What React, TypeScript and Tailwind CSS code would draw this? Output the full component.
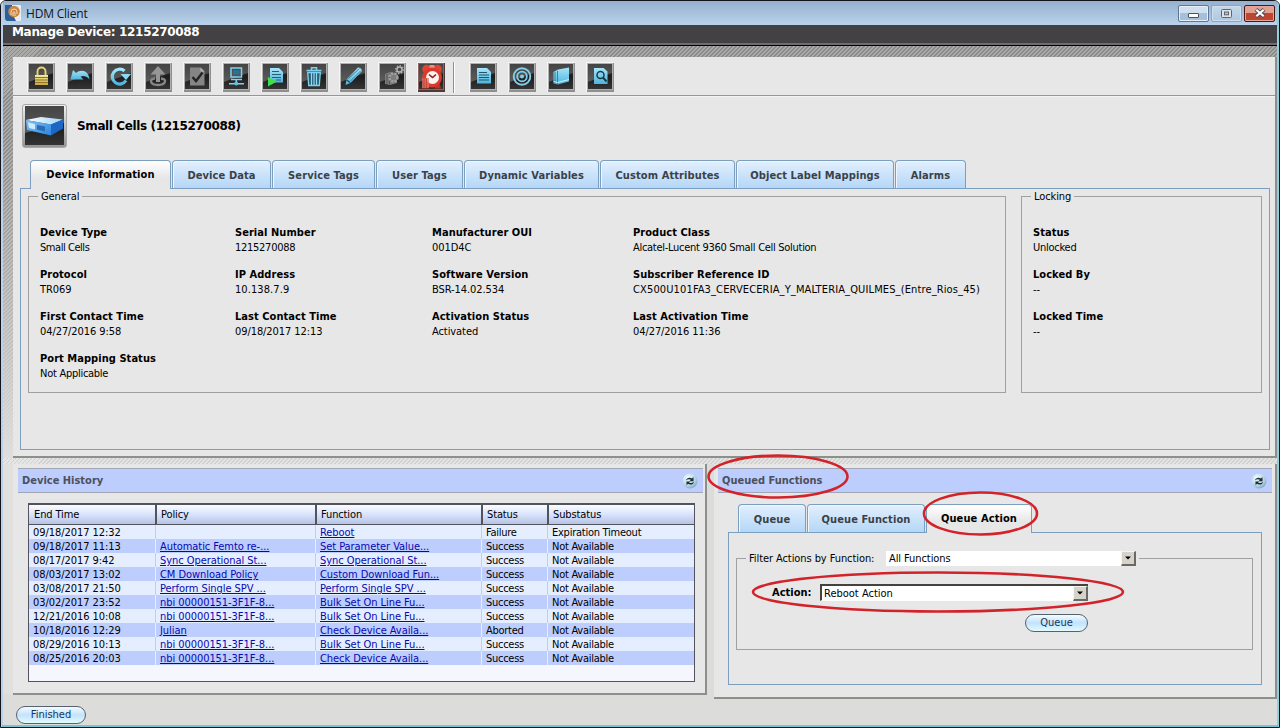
import type { ReactNode } from "react";

const REG = "font-['DejaVu_Sans_Condensed','DejaVu_Sans',sans-serif] [font-stretch:condensed] text-[11px] leading-[14px] whitespace-nowrap";
const BOLD = "font-['DejaVu_Sans_Condensed','DejaVu_Sans',sans-serif] [font-stretch:condensed] font-bold text-[11px] leading-[14px] whitespace-nowrap";
const STRIPES = "bg-[repeating-linear-gradient(135deg,#8a8a8a_0px,#8a8a8a_1.4px,#aaaaa8_1.4px,#aaaaa8_2.83px)]";
const PALE_STRIPES = "bg-[repeating-linear-gradient(135deg,#d2d0ce_0px,#d2d0ce_1.4px,#e6e6e6_1.4px,#e6e6e6_2.83px)]";

function IconButton({ children, alarm }: { children: ReactNode; alarm?: boolean }) {
  return (
    <svg width="28" height="30" viewBox="0 0 28 30" className="shrink-0">
      <rect x="0" y="0" width="28" height="30" fill="#f6f6f6" />
      <rect x="1" y="1" width="27" height="29" fill={alarm ? "#4f3a38" : "#8f8f8f"} />
      <rect x="1" y="1" width="26" height="27" fill={alarm ? "#8a6460" : "#b0b0b0"} />
      <rect x="2" y="2" width="24" height="25" fill="url(#btnDark)" />
      <path d="M2 2H26V11C20 13 10 17 2 20Z" fill="url(#btnGloss)" />
      {children}
    </svg>
  );
}

function Defs() {
  return (
    <svg width="0" height="0" className="absolute">
      <defs>
        <linearGradient id="btnDark" x1="0" y1="0" x2="0" y2="1">
          <stop offset="0" stopColor="#3a3a3a" />
          <stop offset="0.5" stopColor="#1d1d1d" />
          <stop offset="1" stopColor="#343434" />
        </linearGradient>
        <linearGradient id="btnGloss" x1="0" y1="0" x2="0" y2="1">
          <stop offset="0" stopColor="#444" />
          <stop offset="1" stopColor="#5c5c5c" />
        </linearGradient>
        <linearGradient id="cy" x1="0" y1="0" x2="0" y2="1">
          <stop offset="0" stopColor="#a5e6fb" />
          <stop offset="1" stopColor="#4fb3dc" />
        </linearGradient>
        <linearGradient id="gold" x1="0" y1="0" x2="0" y2="1">
          <stop offset="0" stopColor="#f7ec9c" />
          <stop offset="1" stopColor="#c9a83a" />
        </linearGradient>
        <linearGradient id="boxTop" x1="0" y1="0" x2="1" y2="0">
          <stop offset="0" stopColor="#ffffff" />
          <stop offset="1" stopColor="#9fd3fa" />
        </linearGradient>
        <linearGradient id="boxFront" x1="0" y1="0" x2="1" y2="1">
          <stop offset="0" stopColor="#7fc3fb" />
          <stop offset="1" stopColor="#2b84dd" />
        </linearGradient>
        <radialGradient id="refBg" cx="0.35" cy="0.3" r="0.8">
          <stop offset="0" stopColor="#f2fbff" />
          <stop offset="0.6" stopColor="#b5d9e8" />
          <stop offset="1" stopColor="#7f9db5" />
        </radialGradient>
      </defs>
    </svg>
  );
}

function Toolbar() {
  return (
    <div className="flex h-[39px] shrink-0 items-start border-b border-[#969696] pt-[5px] pl-[14px] shadow-[0_1px_0_#f4f4f4]">
      <div className="flex gap-[11px]">
        <IconButton>
          <path d="M10.500 13.500V9.500a4 4 0 0 1 8 0V13.500" fill="none" stroke="#e6d477" strokeWidth="1.900" />
          <rect x="8" y="13" width="13" height="10" fill="url(#gold)" />
          <path d="M8 15.500h13M8 18h13M8 20.500h13" stroke="#8d7328" strokeWidth="1" />
        </IconButton>
        <IconButton>
          <path d="M4.500 17.500L7 8L10 11C15.500 6.500 23 9 23.500 17.500C20.500 14 17 13.500 14.500 14.500L17.500 17.500Z" fill="url(#cy)" />
        </IconButton>
        <IconButton>
          <path d="M21 18.500A7.400 7.400 0 1 1 19.500 9" fill="none" stroke="url(#cy)" strokeWidth="3.200" />
          <path d="M15.500 12H26L21 18Z" fill="#8bd9f4" />
        </IconButton>
        <IconButton>
          <path d="M11 16.500C4.500 17 6 23 14 23S23.500 17 17 16.500" fill="none" stroke="#868686" strokeWidth="2.400" />
          <path d="M14 4L21.500 12.500H16V20H12V12.500H6.500Z" fill="#969696" />
        </IconButton>
        <IconButton>
          <path d="M7 5.500H17.500L21.500 9.500V23.500H7Z" fill="#858585" />
          <path d="M17.500 5.500V9.500H21.500" fill="#b5b5b5" />
          <path d="M9.500 15L13 19L19.500 10.500" fill="none" stroke="#242424" strokeWidth="2.400" />
        </IconButton>
        <IconButton>
          <rect x="9" y="6" width="10.500" height="9" fill="none" stroke="#7fd2ef" strokeWidth="1.500" />
          <rect x="11" y="8" width="6.500" height="4.500" fill="#2c7190" />
          <path d="M9 17.500H20M14.300 17V21M7 21.700H22" stroke="#7fd2ef" strokeWidth="1.500" />
          <circle cx="14.300" cy="21.500" r="2" fill="#5fbfe4" />
        </IconButton>
        <IconButton>
          <path d="M9 6H18L22 10V20.500H9Z" fill="url(#cy)" />
          <path d="M11 9.500H18M11 12.500H20M11 15.500H20M15 18H20" stroke="#2a5e74" strokeWidth="1" />
          <path d="M7 15L16 19.500L7 24.500Z" fill="#3fe04a" />
        </IconButton>
        <IconButton>
          <path d="M6.500 8.500H21.500M11.500 8V5.700H16.500V8" fill="none" stroke="#7fd2ef" strokeWidth="1.500" />
          <path d="M7.700 10.500H20.300L19.300 23.500H8.700Z" fill="#2b5e74" stroke="#7fd2ef" strokeWidth="1.300" />
          <path d="M11.500 11V23M14 11V23M16.500 11V23" stroke="#8bdcf6" strokeWidth="1.200" />
        </IconButton>
        <IconButton>
          <path d="M6.500 23L7.500 17.500L19 5.500Q22.500 5.500 23 9L11.500 21Z" fill="url(#cy)" />
          <path d="M9.500 16.500L20.500 6.500M11.500 19L22 8.500" stroke="#2b708c" strokeWidth="0.800" />
          <path d="M7.500 17.800L11.300 20.800" stroke="#1d4b5f" strokeWidth="1.200" />
        </IconButton>
        <IconButton>
          <path d="M7 12L12 10L19 12V21L12 23L7 22Z" fill="#7d7d7d" />
          <path d="M9 12V22M11.500 11.500V22.500" stroke="#555" />
          <circle cx="15.500" cy="15.500" r="4" fill="none" stroke="#a2a2a2" strokeWidth="2.400" strokeDasharray="2 1.200" />
          <circle cx="21.500" cy="7.500" r="2.600" fill="none" stroke="#b4b4b4" strokeWidth="1.500" />
          <circle cx="21.500" cy="7.500" r="3.900" fill="none" stroke="#b4b4b4" strokeWidth="1.200" strokeDasharray="1.400 1.600" />
        </IconButton>
        <IconButton alarm>
          <circle cx="9.500" cy="7" r="4.300" fill="#e04434" />
          <circle cx="20.500" cy="7" r="4.300" fill="#e04434" />
          <rect x="12.500" y="3" width="5" height="3" fill="#f09080" />
          <path d="M7 20L5 26.500H12ZM22 20L24 26.500H17Z" fill="#c42f22" />
          <circle cx="15" cy="15.500" r="10" fill="#d93a2b" />
          <circle cx="15.500" cy="15.500" r="6.500" fill="#fdf3f0" />
          <path d="M12 12.500L15.500 15.500L19 12.500" fill="none" stroke="#8a2018" strokeWidth="1.600" />
          <path d="M5 16H12V26H5Z" fill="#e0786f" opacity="0.75" />
          <path d="M7 16V26M9.500 16V26" stroke="#c23a30" strokeWidth="0.800" />
        </IconButton>
      </div>
      <div className="mr-[14px] ml-[8px] h-[31px] w-[2px] border-l border-[#909090] bg-white" />
      <div className="flex gap-[11px]">
        <IconButton>
          <path d="M8 6H18L22 10V21.500H8Z" fill="url(#cy)" />
          <path d="M10 10.500H18M10 13H20M10 15.500H20M10 18H20" stroke="#24556b" strokeWidth="1.100" />
        </IconButton>
        <IconButton>
          <circle cx="14" cy="14.500" r="8.300" fill="none" stroke="#82cfeb" strokeWidth="1.900" />
          <circle cx="14" cy="14.500" r="4.800" fill="none" stroke="#82cfeb" strokeWidth="1.800" />
          <circle cx="14" cy="14.500" r="2" fill="#82cfeb" />
        </IconButton>
        <IconButton>
          <path d="M6.500 10L11 7.500L22 5.500V19.500L11 22.500L6.500 21.500Z" fill="url(#cy)" />
          <path d="M8 10V21.500M10.500 9V22.500" fill="none" stroke="#2e7a99" strokeWidth="0.900" />
          <path d="M6.500 19.500L10.500 20.500L22 17.500" fill="none" stroke="#d5f6ff" strokeWidth="0.900" />
        </IconButton>
        <IconButton>
          <path d="M8 6H17.500L21.500 9.500V22H8Z" fill="url(#cy)" />
          <circle cx="14.500" cy="13" r="3.500" fill="none" stroke="#183c4b" strokeWidth="1.500" />
          <path d="M17 15.500L20.500 19.500" stroke="#183c4b" strokeWidth="1.900" />
        </IconButton>
      </div>
    </div>
  );
}

function Tab({ label, w, active }: { label: string; w: string; active?: boolean }) {
  return (
    <div
      className={
        w +
        " flex shrink-0 items-center justify-center rounded-t-[4px] border border-[#7d9fbf] tracking-[0.1px] " +
        BOLD +
        (active
          ? " h-[29px] border-b-0 bg-linear-to-b from-white to-[#e7e7e7] to-60% text-black"
          : " h-[28px] border-b-0 bg-linear-to-b from-[#e3f0fe] via-[#cbe3fa] to-[#b5d6f8] pt-[2px] text-[#3a4148] shadow-[inset_1px_1px_0_#eef7ff]")
      }
    >
      {label}
    </div>
  );
}

function Field({ label, value, track = "tracking-[-0.08px]" }: { label: string; value: string; track?: string }) {
  return (
    <div className="h-[42px]">
      <div className={BOLD + " h-[15px] tracking-[0.05px]"}>{label}</div>
      <div className={REG + " " + track}>{value}</div>
    </div>
  );
}

function Legend({ children }: { children: ReactNode }) {
  return <legend className={REG + " ml-[9px] h-[15px] px-[3px] pt-px tracking-[-0.1px]"}>{children}</legend>;
}

function PanelBar({ title }: { title: string }) {
  return (
    <div className="flex h-[25px] shrink-0 items-center justify-between border-y border-[#a3a7b5] bg-[#bccdfe] pr-[5px] pl-[4px]">
      <span className={BOLD + " pt-px text-[#4c505c]"}>{title}</span>
      <svg width="16" height="16" viewBox="0 0 16 16">
        <circle cx="8" cy="8" r="7.500" fill="url(#refBg)" />
        <path d="M4 7.500C4.500 4.500 8 4 10 5.500L11.500 4V8.200H7.500L9 6.800C7.500 6 5.500 6 4 7.500Z" fill="#1f2b33" />
        <path d="M12 8.700C11.500 11.700 8 12.200 6 10.700L4.500 12.200V8.500H8.500L7 9.700C8.500 10.300 10.500 10.200 12 8.700Z" fill="#1f2b33" />
      </svg>
    </div>
  );
}

function PillButton({ label, w }: { label: string; w: string }) {
  return (
    <button
      className={
        w +
        " flex h-[18px] shrink-0 items-center justify-center rounded-full border border-[#56626e] bg-linear-to-b from-[#f5fbff] via-[#c3e2fc] to-[#e2fbff] text-[#12395f] " +
        REG
      }
    >
      {label}
    </button>
  );
}

function Arrow() {
  return (
    <span className="flex h-[15px] w-[15px] shrink-0 items-center justify-center border-t border-r-2 border-b-2 border-l border-t-[#f4f4f0] border-r-[#6b6964] border-b-[#6b6964] border-l-[#f4f4f0] bg-[#d6d3cb]">
      <svg width="6" height="4" viewBox="0 0 6 4"><path d="M0 0.500H6L3 3.500Z" fill="#000" /></svg>
    </span>
  );
}

const NBI = "nbi 00000151-3F1F-8...";
const ROWS = [
  ["09/18/2017 12:32", "", "Reboot", "Failure", "Expiration Timeout"],
  ["09/18/2017 11:13", "Automatic Femto re-...", "Set Parameter Value...", "Success", "Not Available"],
  ["08/17/2017 9:42", "Sync Operational St...", "Sync Operational St...", "Success", "Not Available"],
  ["08/03/2017 13:02", "CM Download Policy", "Custom Download Fun...", "Success", "Not Available"],
  ["03/08/2017 21:50", "Perform Single SPV ...", "Perform Single SPV ...", "Success", "Not Available"],
  ["03/02/2017 23:52", NBI, "Bulk Set On Line Fu...", "Success", "Not Available"],
  ["12/21/2016 10:08", NBI, "Bulk Set On Line Fu...", "Success", "Not Available"],
  ["10/18/2016 12:29", "Julian", "Check Device Availa...", "Aborted", "Not Available"],
  ["08/29/2016 10:13", NBI, "Bulk Set On Line Fu...", "Success", "Not Available"],
  ["08/25/2016 20:03", NBI, "Check Device Availa...", "Success", "Not Available"],
];
const GRID = "grid grid-cols-[126px_160px_166px_66px_147px]";
const TRACKS = ["tracking-[-0.06px]", "tracking-[-0.06px]", "tracking-[-0.06px]", "tracking-[-0.27px]", "tracking-[-0.25px]"];

function HistoryTable() {
  return (
    <div className="mt-[10px] ml-[10px] flex h-[179px] w-[667px] flex-col border border-[#53535b] border-t-2 bg-[#f6f7fe]">
      <div className={GRID + " h-[20px] shrink-0 border-b border-[#53535b] bg-linear-to-b from-[#fbfcff] via-[#d9e3fb] to-[#b6c3e4]"}>
        {["End Time", "Policy", "Function", "Status", "Substatus"].map((h, i) => (
          <div key={h} className={REG + " pt-[3px] tracking-[-0.12px] " + (i ? "border-l-2 border-[#53535b] pl-[4px]" : "pl-[5px]")}>{h}</div>
        ))}
      </div>
      {ROWS.map((r, n) => (
        <div key={n} className={GRID + " h-[14px] shrink-0 " + (n % 2 ? "bg-[#bccdfe]" : "bg-[#e5eefe]")}>
          {r.map((c, i) => (
            <div key={i} className={REG + " pl-[4px] " + TRACKS[i] + (i ? " border-l " : " ") + (n % 2 ? "border-[#e5eefe]" : "border-[#bccdfe]")}>
              <span className="relative top-px">
                {i === 1 || i === 2 ? <a className="text-[#0808b0] underline underline-offset-1">{c}</a> : c}
              </span>
            </div>
          ))}
        </div>
      ))}
    </div>
  );
}

function TitleBar() {
  return (
    <div className="flex h-[24px] shrink-0 items-center bg-linear-to-b from-[#95b1cf] to-[#bad2eb] pr-[2px] pl-[2px]">
      <svg width="16" height="16" viewBox="0 0 16 16">
        <rect width="16" height="16" rx="1" fill="#e8edf2" />
        <path d="M0 0H7V8L11 16H2Q0 16 0 13Z" fill="#2f5f95" />
        <circle cx="9" cy="6.500" r="5.800" fill="#c98544" />
        <path d="M6 10V7a3 3 0 0 1 6 0v2M8 11V7.500a1.200 1.200 0 0 1 2 0V11" fill="none" stroke="#f7dcb5" strokeWidth="1" />
      </svg>
      <span className="ml-[5px] flex-1 pt-px font-['Open_Sans','Noto_Sans',sans-serif] text-[12px] leading-[16px] tracking-[-0.2px] text-[#10161e]">HDM Client</span>
      <div className="flex gap-[2px]">
        <div className="flex h-[17px] w-[31px] items-end justify-center rounded-[2px] border border-[#5b7696] bg-linear-to-b from-[#d0dfef] from-50% to-[#a7c0da] to-50% pb-[3px] shadow-[inset_0_0_0_1px_#e6eff8]">
          <div className="h-[5px] w-[11px] rounded-[1px] border border-[#4b5360] bg-white" />
        </div>
        <div className="flex h-[17px] w-[31px] items-center justify-center rounded-[2px] border border-[#8aa4c1] bg-linear-to-b from-[#c5d8eb] to-[#adc7e0] shadow-[inset_0_0_0_1px_#cfdff0]">
          <svg width="11" height="9" viewBox="0 0 11 9"><rect x="0.500" y="0.500" width="10" height="8" rx="1" fill="#dfe3e8" stroke="#5c6470" /><rect x="3.500" y="3" width="4" height="2.800" fill="#b0c5da" stroke="#5c6470" /></svg>
        </div>
        <div className="flex h-[17px] w-[31px] items-center justify-center rounded-[2px] border border-[#4a1713] bg-linear-to-b from-[#e0a192] from-50% to-[#c0452f] to-50% shadow-[inset_0_0_0_1px_#e4a698]">
          <svg width="12" height="10" viewBox="0 0 12 10"><path d="M2 1.500L10 8.500M10 1.500L2 8.500" stroke="#4f4a55" strokeWidth="4" /><path d="M2.300 1.700L9.700 8.300M9.700 1.700L2.300 8.300" stroke="#fff" strokeWidth="2.200" /></svg>
        </div>
      </div>
    </div>
  );
}

export default function App() {
  return (
    <div className="relative flex h-[728px] w-[1280px] overflow-hidden rounded-t-[6px] border border-[#141418] bg-[#dcdddb] text-black">
      <Defs />
      <div className="w-[2px] shrink-0 bg-[#b9d1ea]" />
      <div className="flex w-[1274px] shrink-0 flex-col">
        <TitleBar />
        <div className="h-[18px] shrink-0 bg-[#434143] pl-[9px]">
          <div className="font-['DejaVu_Sans',sans-serif] text-[12px] leading-[14px] font-bold tracking-[-0.32px] text-white">Manage Device: 1215270088</div>
        </div>
        <div className="h-[3px] shrink-0 border-b border-black bg-[#6f6d6f]" />
        <div className={STRIPES + " h-[11px] shrink-0"} />

        <div className="flex h-[401px] shrink-0">
          <div className={STRIPES + " relative w-[10px] shrink-0"}>
            <div className="h-full bg-linear-to-b from-transparent from-20% to-[#e6e6e6]/90" />
          </div>
          <div className="flex w-[1264px] flex-col border-r-2 border-b-2 border-[#8b908d] bg-[#e7e7e7]">
            <Toolbar />
            <div className="flex h-[59px] shrink-0 items-center pl-[9px]">
              <div className="flex h-[44px] w-[45px] items-center justify-center rounded-[3px] border border-[#a8a8a8] bg-linear-to-b from-[#f2f2f2] to-[#949494]">
                <svg width="39" height="39" viewBox="0 0 39 39">
                  <rect width="39" height="39" fill="url(#btnDark)" />
                  <path d="M0 0H39V17L0 27Z" fill="url(#btnGloss)" />
                  <path d="M1 14L16 11L38 13.500L26 18.500Z" fill="url(#boxTop)" />
                  <path d="M1 14L26 18.500V29.500L2 24Z" fill="url(#boxFront)" />
                  <path d="M26 18.500L38 13.500V22.500L26 29.500Z" fill="#1c66c4" />
                  <path d="M3 16.500L10 18V23.500L4 22Z" fill="#cfe9ff" />
                  <path d="M12 19L20 20.500V25.500L12 23.500Z" fill="#2b6cb0" />
                </svg>
              </div>
              <span className="ml-[10px] font-['DejaVu_Sans',sans-serif] text-[12px] leading-[16px] font-bold tracking-[-0.38px]">Small Cells (1215270088)</span>
            </div>
            <div className="relative z-10 mt-[5px] -mb-px flex h-[29px] shrink-0 items-start gap-px pl-[17px]">
              <Tab label="Device Information" w="w-[141px]" active />
              <Tab label="Device Data" w="w-[99px]" />
              <Tab label="Service Tags" w="w-[103px]" />
              <Tab label="User Tags" w="w-[87px]" />
              <Tab label="Dynamic Variables" w="w-[135px]" />
              <Tab label="Custom Attributes" w="w-[135px]" />
              <Tab label="Object Label Mappings" w="w-[158px]" />
              <Tab label="Alarms" w="w-[71px]" />
            </div>
            <div className="ml-[7px] flex h-[262px] w-[1250px] shrink-0 items-start gap-[15px] border border-[#7d9fbf] pl-[7px]">
              <fieldset className="h-[204px] w-[978px] border border-[#a0a0a0]">
                <Legend>General</Legend>
                <div className="grid grid-cols-[195px_197px_201px_360px] pt-[22px] pl-[11px]">
                  <Field label="Device Type" value="Small Cells" track="tracking-[-0.45px]" />
                  <Field label="Serial Number" value="1215270088" track="tracking-[-0.27px]" />
                  <Field label="Manufacturer OUI" value="001D4C" />
                  <Field label="Product Class" value="Alcatel-Lucent 9360 Small Cell Solution" track="tracking-[-0.29px]" />
                  <Field label="Protocol" value="TR069" />
                  <Field label="IP Address" value="10.138.7.9" track="tracking-[0.08px]" />
                  <Field label="Software Version" value="BSR-14.02.534" />
                  <Field label="Subscriber Reference ID" value="CX500U101FA3_CERVECERIA_Y_MALTERIA_QUILMES_(Entre_Rios_45)" track="tracking-[0.13px]" />
                  <Field label="First Contact Time" value="04/27/2016 9:58" />
                  <Field label="Last Contact Time" value="09/18/2017 12:13" />
                  <Field label="Activation Status" value="Activated" />
                  <Field label="Last Activation Time" value="04/27/2016 11:36" />
                  <Field label="Port Mapping Status" value="Not Applicable" track="tracking-[-0.27px]" />
                </div>
              </fieldset>
              <fieldset className="h-[204px] w-[241px] border border-[#a0a0a0]">
                <Legend>Locking</Legend>
                <div className="pt-[22px] pl-[11px]">
                  <Field label="Status" value="Unlocked" track="tracking-[-0.25px]" />
                  <Field label="Locked By" value="--" />
                  <Field label="Locked Time" value="--" />
                </div>
              </fieldset>
            </div>
          </div>
        </div>

        <div className={PALE_STRIPES + " h-[6px] shrink-0"} />

        <div className="flex h-[235px] shrink-0 items-start">
          <div className="h-[230px] w-[10px] shrink-0 bg-[#e0e0df]" />
          <div className="h-[231px] w-[694px] shrink-0 border-r-2 border-b-2 border-[#8b908d] bg-[#e7e7e7] pt-[4px] pl-[5px]">
            <div className="w-[685px]"><PanelBar title="Device History" /></div>
            <HistoryTable />
          </div>
          <div className="w-[7px] shrink-0" />
          <div className="flex h-[235px] w-[563px] shrink-0 flex-col border-r-2 border-b-2 border-[#8b908d] bg-[#e7e7e7] pt-[4px] pr-[3px] pl-[4px]">
            <PanelBar title="Queued Functions" />
            <div className="relative z-10 mt-[11px] -mb-px flex h-[29px] shrink-0 items-start gap-px pl-[20px]">
              <Tab label="Queue" w="w-[68px]" />
              <Tab label="Queue Function" w="w-[118px]" />
              <Tab label="Queue Action" w="w-[106px]" active />
            </div>
            <div className="ml-[10px] h-[153px] w-[534px] shrink-0 border border-[#7d9fbf] pt-[17px] pl-[7px]">
              <fieldset className="flex h-[100px] w-[517px] flex-col border border-[#a0a0a0]">
                <legend className={REG + " ml-[9px] h-[16px] px-[3px] tracking-[-0.08px]"}>
                  <span className="flex h-[16px] items-center">
                    <span className="w-[137px] pt-px">Filter Actions by Function:</span>
                    <span className="flex h-[15px] w-[250px] items-center justify-between bg-white pl-[3px]">
                      <span className="pt-px">All Functions</span>
                      <Arrow />
                    </span>
                  </span>
                </legend>
                <div className="flex items-center pt-[18px] pl-[35px]">
                  <span className={BOLD + " w-[48px] pt-px"}>Action:</span>
                  <span className={REG + " flex h-[17px] w-[268px] items-center justify-between border-t-2 border-b border-l-2 border-t-[#44423f] border-b-white border-l-[#44423f] bg-white pl-[2px]"}>
                    <span className="pt-px">Reboot Action</span>
                    <Arrow />
                  </span>
                </div>
                <div className="mt-[13px] pl-[288px]">
                  <PillButton label="Queue" w="w-[63px]" />
                </div>
              </fieldset>
            </div>
          </div>
        </div>
        <div className="flex h-[27px] shrink-0 items-start pt-[7px] pl-[13px]">
          <PillButton label="Finished" w="w-[70px]" />
        </div>
      </div>
      <div className="w-[2px] shrink-0 bg-[#8fd0da]" />
      <svg width="1280" height="728" viewBox="0 0 1280 728" className="pointer-events-none absolute -top-px -left-px z-20">
        <path d="M2 726H1278" stroke="#56bccb" strokeWidth="1.500" />
        <g fill="none" stroke="#d2232a" strokeWidth="2.600">
          <ellipse cx="778" cy="476.500" rx="69.500" ry="21" />
          <ellipse cx="980.500" cy="513.500" rx="56.500" ry="21" />
          <ellipse cx="938" cy="592" rx="185" ry="19.500" />
        </g>
      </svg>
    </div>
  );
}
